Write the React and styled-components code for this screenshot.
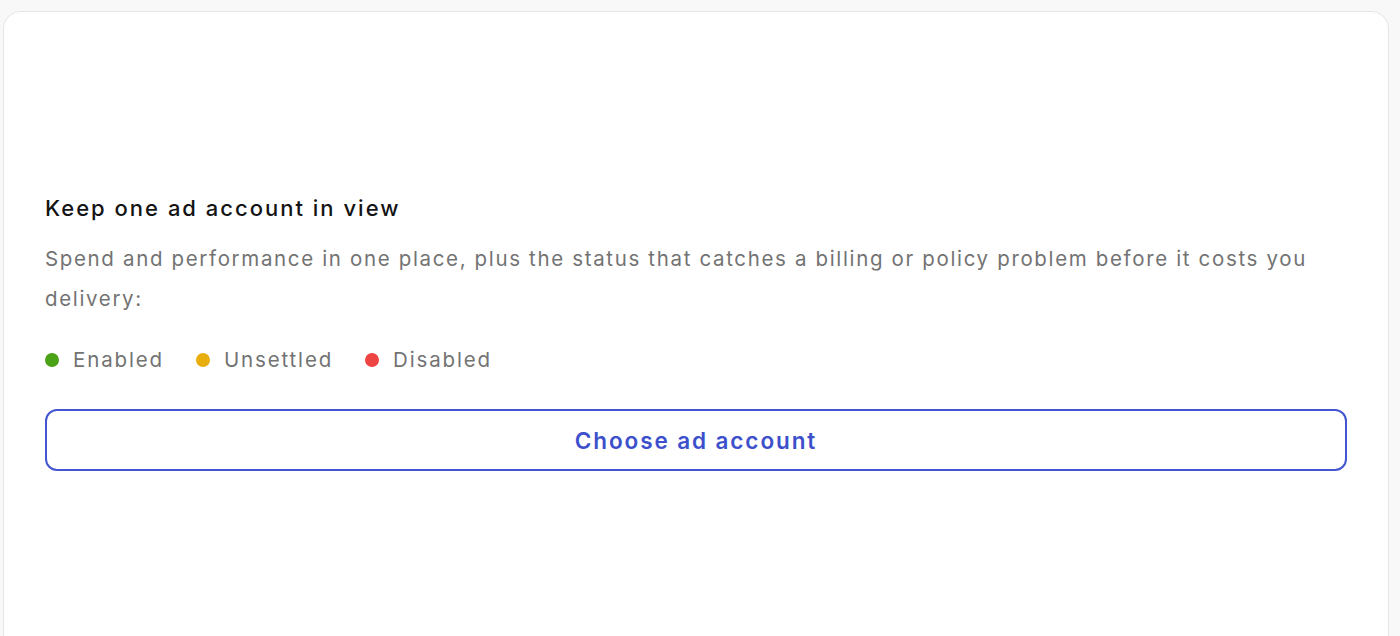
import styled, { createGlobalStyle } from "styled-components";

const GlobalStyle = createGlobalStyle`
  * { box-sizing: border-box; }
  html, body {
    margin: 0;
    padding: 0;
    background: #f8f8f8;
    font-family: Inter, "Noto Sans", sans-serif;
    -webkit-font-smoothing: antialiased;
  }
`;

const Page = styled.div`
  padding: 11px 11px 0 3px;
  height: 636px;
  overflow: hidden;
`;

const Card = styled.section`
  background: #ffffff;
  border: 1px solid #e4e4e9;
  border-radius: 18px;
  min-height: 700px;
  padding: 181px 41px 0 41px;
  display: flex;
  flex-direction: column;
`;

const Title = styled.h2`
  margin: 0;
  font-size: 22px;
  line-height: 30px;
  font-weight: 500;
  color: #141414;
  letter-spacing: 2px;
`;

const Description = styled.p`
  margin: 16px 0 0 0;
  font-size: 20.5px;
  line-height: 40px;
  font-weight: 400;
  color: #737373;
  letter-spacing: 1.65px;
`;

const Legend = styled.ul`
  list-style: none;
  margin: 26px 0 0 0;
  padding: 0;
  display: flex;
  align-items: center;
  gap: 32px;
`;

const LegendItem = styled.li`
  display: flex;
  align-items: center;
  gap: 14px;
  font-size: 20.5px;
  line-height: 30px;
  color: #737373;
  letter-spacing: 1.85px;
`;

const Dot = styled.span`
  width: 14px;
  height: 14px;
  border-radius: 50%;
  background: ${(p) => p.color};
  flex-shrink: 0;
`;

const ChooseButton = styled.button`
  margin-top: 34px;
  width: 100%;
  height: 62px;
  background: #ffffff;
  border: 2px solid #4356cf;
  border-radius: 12px;
  font-family: inherit;
  font-size: 22.5px;
  font-weight: 600;
  color: #3d50cc;
  letter-spacing: 1.9px;
  cursor: pointer;
`;

const statuses = [
  { label: "Enabled", color: "#4aa217" },
  { label: "Unsettled", color: "#e8ae0b" },
  { label: "Disabled", color: "#ef4444" },
];

export default function App() {
  return (
    <>
      <GlobalStyle />
      <Page>
        <Card>
          <Title>Keep one ad account in view</Title>
          <Description>
            Spend and performance in one place, plus the status that catches a
            billing or policy problem before it costs you delivery:
          </Description>
          <Legend>
            {statuses.map((s) => (
              <LegendItem key={s.label}>
                <Dot color={s.color} />
                {s.label}
              </LegendItem>
            ))}
          </Legend>
          <ChooseButton>Choose ad account</ChooseButton>
        </Card>
      </Page>
    </>
  );
}
